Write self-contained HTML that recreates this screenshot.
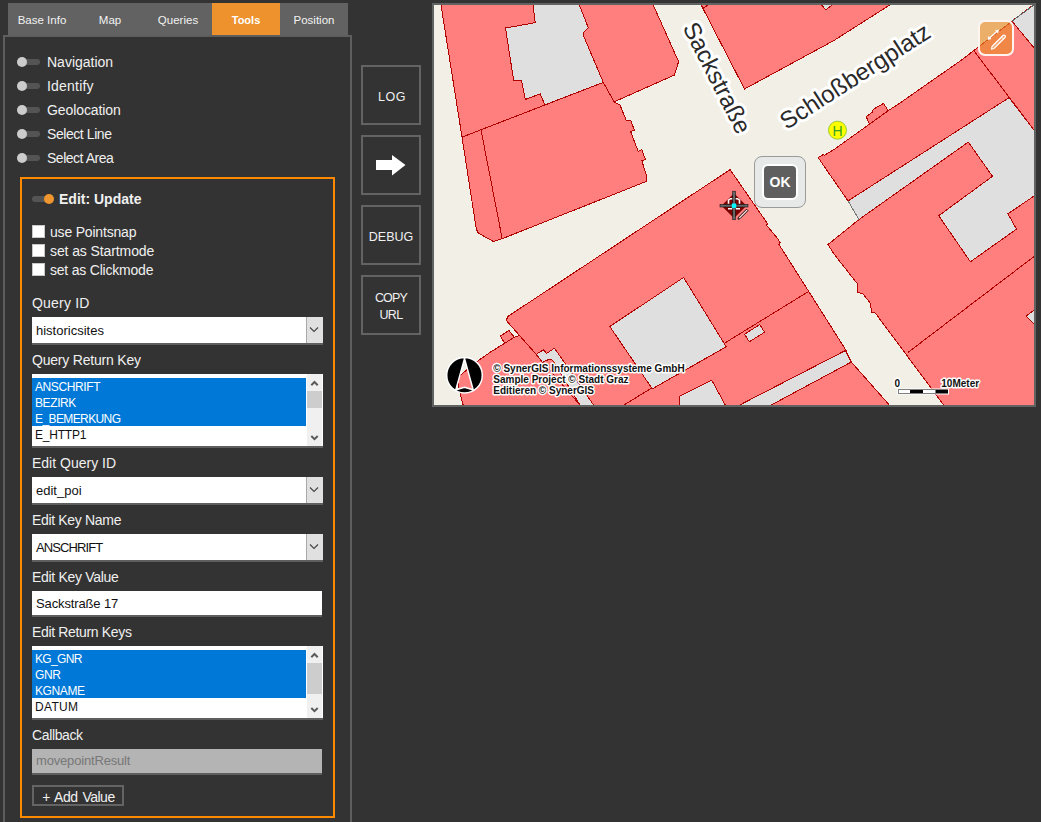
<!DOCTYPE html>
<html><head><meta charset="utf-8">
<style>
html,body{margin:0;padding:0;}
body{width:1041px;height:822px;overflow:hidden;background:#333333;position:relative;font-family:"Liberation Sans",sans-serif;color:#f0f0f0;}
.a{position:absolute;}
.tab{position:absolute;top:3px;height:32px;width:68px;background:#626262;color:#f2f2f2;font-size:11.5px;line-height:34px;text-align:center;}
.tab.on{background:#ee922e;font-weight:bold;color:#fff;font-size:11px;}
.panel{position:absolute;left:3px;top:35px;width:345px;height:800px;border:2px solid #5e5e5e;border-bottom:none;}
.tg{position:absolute;left:17px;width:23px;height:6px;border-radius:3px;background:#545454;}
.tg i{position:absolute;left:0px;top:-2px;width:10px;height:10px;border-radius:50%;background:#cccccc;}
.lbl{position:absolute;font-size:14px;line-height:16px;white-space:nowrap;color:#f0f0f0;}
.obox{position:absolute;left:20px;top:177px;width:311px;height:637px;border:2px solid #ff8a00;}
.cb{position:absolute;left:32px;width:11px;height:11px;background:#fff;border:1px solid #c8c8c8;}
.sel{position:absolute;left:32px;width:291px;height:26px;background:#fff;border-bottom:2px solid #5e5e5e;color:#111;font-size:13px;}
.sel span{position:absolute;left:4px;top:6px;line-height:16px;}
.sel .dd{position:absolute;right:0;top:0;width:16px;height:26px;background:#e0e0e0;border-left:1px solid #a8a8a8;}
.inp{position:absolute;left:32px;width:290px;height:24px;background:#fff;border-bottom:2px solid #5e5e5e;color:#111;font-size:13px;}
.inp span{position:absolute;left:4px;top:4px;line-height:16px;}
.lb{position:absolute;left:32px;width:291px;height:72px;background:#fff;border-bottom:2px solid #5e5e5e;color:#111;font-size:12px;}
.lb .row{position:absolute;left:0;width:274px;height:16px;line-height:16px;}
.lb .row span{position:absolute;left:3px;top:1px;letter-spacing:-0.4px;}
.lb .row.s{background:#0078d7;color:#fff;}
.lb .sb{position:absolute;left:275px;top:0;width:15px;height:72px;background:#f0f0f0;}
.lb .th{position:absolute;left:0;top:17px;width:15px;height:17px;background:#cdcdcd;}
.mbtn{position:absolute;left:361px;width:56px;height:56px;border:2px solid #636363;color:#f0f0f0;font-size:12.5px;text-align:center;}
</style></head><body>
<div class="tab" style="left:8px">Base Info</div>
<div class="tab" style="left:76px">Map</div>
<div class="tab" style="left:144px">Queries</div>
<div class="tab on" style="left:212px">Tools</div>
<div class="tab" style="left:280px">Position</div>
<div class="panel"></div>

<div class="tg" style="top:59px"><i></i></div><div class="lbl" style="left:47px;top:54px">Navigation</div>
<div class="tg" style="top:83px"><i></i></div><div class="lbl" style="left:47px;top:78px;letter-spacing:0.2px">Identify</div>
<div class="tg" style="top:107px"><i></i></div><div class="lbl" style="left:47px;top:102px;letter-spacing:-0.09px">Geolocation</div>
<div class="tg" style="top:131px"><i></i></div><div class="lbl" style="left:47px;top:126px;letter-spacing:-0.43px">Select Line</div>
<div class="tg" style="top:155px"><i></i></div><div class="lbl" style="left:47px;top:150px;letter-spacing:-0.48px">Select Area</div>

<div class="obox"></div>
<div class="a" style="left:32px;top:196px;width:21px;height:6px;border-radius:3px;background:#545454"></div>
<div class="a" style="left:44px;top:194px;width:10px;height:10px;border-radius:50%;background:#f0962e"></div>
<div class="lbl" style="left:59px;top:191px;font-weight:bold">Edit: Update</div>

<div class="cb" style="top:225px"></div><div class="lbl" style="left:50px;top:224px;letter-spacing:-0.19px">use Pointsnap</div>
<div class="cb" style="top:244px"></div><div class="lbl" style="left:50px;top:243px;letter-spacing:-0.1px">set as Startmode</div>
<div class="cb" style="top:263px"></div><div class="lbl" style="left:50px;top:262px;letter-spacing:-0.21px">set as Clickmode</div>

<div class="lbl" style="left:32px;top:295px;letter-spacing:0.2px">Query ID</div>
<div class="sel" style="top:317px"><span>historicsites</span><div class="dd"><svg style="position:absolute;left:2px;top:9px" width="10" height="7" viewBox="0 0 10 7"><path d="M1,1.5 L5,5.5 L9,1.5" fill="none" stroke="#444" stroke-width="1.1"/></svg></div></div>

<div class="lbl" style="left:32px;top:352px;letter-spacing:-0.2px">Query Return Key</div>
<div class="lb" style="top:374px">
 <div class="row s" style="top:4px"><span>ANSCHRIFT</span></div>
 <div class="row s" style="top:20px"><span>BEZIRK</span></div>
 <div class="row s" style="top:36px"><span style="letter-spacing:-0.6px">E_BEMERKUNG</span></div>
 <div class="row" style="top:52px"><span style="letter-spacing:-0.2px">E_HTTP1</span></div>
 <div class="sb"><svg style="position:absolute;left:2px;top:5px" width="11" height="8" viewBox="0 0 11 8"><path d="M2.3,6.2 L5.5,3 L8.7,6.2" fill="none" stroke="#5a5a5a" stroke-width="2"/></svg><div class="th"></div><svg style="position:absolute;left:2px;top:60px" width="11" height="8" viewBox="0 0 11 8"><path d="M2.3,2 L5.5,5.2 L8.7,2" fill="none" stroke="#5a5a5a" stroke-width="2"/></svg></div>
</div>

<div class="lbl" style="left:32px;top:455px">Edit Query ID</div>
<div class="sel" style="top:477px"><span>edit_poi</span><div class="dd"><svg style="position:absolute;left:2px;top:9px" width="10" height="7" viewBox="0 0 10 7"><path d="M1,1.5 L5,5.5 L9,1.5" fill="none" stroke="#444" stroke-width="1.1"/></svg></div></div>

<div class="lbl" style="left:32px;top:512px;letter-spacing:-0.33px">Edit Key Name</div>
<div class="sel" style="top:534px"><span style="letter-spacing:-0.9px">ANSCHRIFT</span><div class="dd"><svg style="position:absolute;left:2px;top:9px" width="10" height="7" viewBox="0 0 10 7"><path d="M1,1.5 L5,5.5 L9,1.5" fill="none" stroke="#444" stroke-width="1.1"/></svg></div></div>

<div class="lbl" style="left:32px;top:569px;letter-spacing:-0.3px">Edit Key Value</div>
<div class="inp" style="top:591px"><span style="letter-spacing:-0.13px;top:5px">Sackstraße 17</span></div>

<div class="lbl" style="left:32px;top:624px;letter-spacing:-0.34px">Edit Return Keys</div>
<div class="lb" style="top:646px">
 <div class="row s" style="top:4px"><span style="letter-spacing:-0.66px">KG_GNR</span></div>
 <div class="row s" style="top:20px"><span>GNR</span></div>
 <div class="row s" style="top:36px"><span>KGNAME</span></div>
 <div class="row" style="top:52px"><span style="letter-spacing:0.3px">DATUM</span></div>
 <div class="sb"><svg style="position:absolute;left:2px;top:5px" width="11" height="8" viewBox="0 0 11 8"><path d="M2.3,6.2 L5.5,3 L8.7,6.2" fill="none" stroke="#5a5a5a" stroke-width="2"/></svg><div class="th" style="height:31px"></div><svg style="position:absolute;left:2px;top:60px" width="11" height="8" viewBox="0 0 11 8"><path d="M2.3,2 L5.5,5.2 L8.7,2" fill="none" stroke="#5a5a5a" stroke-width="2"/></svg></div>
</div>

<div class="lbl" style="left:32px;top:727px;letter-spacing:-0.37px">Callback</div>
<div class="inp" style="top:749px;background:#b4b4b4;color:#777"><span style="letter-spacing:-0.17px">movepointResult</span></div>

<div class="a" style="left:32px;top:785px;width:88px;height:17px;border:2px solid #646464;font-size:14px;line-height:21px;text-align:center;color:#f0f0f0;letter-spacing:-0.5px;word-spacing:1.5px;text-indent:1px">+ Add Value</div>

<div class="mbtn" style="top:65px;line-height:60px;letter-spacing:0.6px;text-indent:2px">LOG</div>
<div class="mbtn" style="top:135px"><svg style="position:absolute;left:11px;top:17px" width="34" height="24" viewBox="0 0 34 24"><path d="M2,6 H18 V1 L31.5,11 L18,21.5 V16 H2 Z" fill="#fff"/></svg></div>
<div class="mbtn" style="top:205px;line-height:60px">DEBUG</div>
<div class="mbtn" style="top:275px;line-height:17px"><div style="padding-top:13px"><span style="letter-spacing:-0.8px">COPY</span><br><span style="letter-spacing:-0.6px">URL</span></div></div>

<div class="a" style="left:432px;top:3px;width:600px;height:400px;border:2px solid #616262;background:#f2efe6"></div>
<svg class="a" style="left:434px;top:5px" width="600" height="400" viewBox="434 5 600 400" shape-rendering="crispEdges">
<rect x="434" y="5" width="600" height="400" fill="#f2efe6"/>
<g fill="#ff7f7f" stroke="#b00000" stroke-width="1" stroke-linejoin="miter">
<polygon points="440.2,0 462,137 476.3,229.1 478.2,233 493.6,241.6 502.2,238.7 646.2,181.5 646.9,177.1 641.8,160.6 645.5,159.6 641.8,149.8 638.2,151.5 630.6,131.4 634.5,130.4 630.9,120.9 626.5,120.9 619.9,104.8 614.1,101.9 674.3,75.1 678.6,61.7 651,0"/>
<polygon points="698.6,0 744.5,89 834,40.5 897.5,0"/>
<polygon points="818.2,157.7 823.1,154.7 824.3,155.3 833.3,150 869.6,124.1 866.2,116.8 872.7,112 873.1,109.4 883.5,103.4 888.2,110.7 900,103 961.6,60 1039.5,0 1040,0 1040,410 947.4,410 875.3,313 871.5,312 870.5,303.4 862.8,293.8 857,291.9 857,283.3 842.6,265 834,254 828,244.5 834,239.7 859,219.5 848,200.9"/>
<polygon points="730.1,169.6 764.6,219.5 767.5,223.4 766.6,225.3 777.1,237.8 780,242.6 779,244.5 845.5,349.5 851.3,362 893.7,410 464.5,410 460.1,393.8 457,378 477.1,361.4 490,352.4 504.6,343.3 500.3,336 508.9,330.5 514.3,337.2 519.4,335.4 506.4,320.6 507.6,316.6"/>
</g>
<g fill="none" stroke="#b00000" stroke-width="1">
<polyline points="577.4,0 588.3,27.7 583.9,31.9 583.5,35.7 603.3,82.4 614.1,101.9"/>
<polyline points="462.3,137 603.3,82.4"/>
<polyline points="481,130 502.2,238.7"/>
<polyline points="702.3,8.4 710,4"/>
<polyline points="974.2,51.2 1034,130"/>
<polyline points="908,352.4 1040,252"/>
<polyline points="624,405 807.9,291.9"/>
<polyline points="519.4,335.4 536.2,354.3 580,405"/>
<polyline points="869.6,124.1 888.2,110.7"/>
<polyline points="514.3,337.2 504.6,343.3"/>
</g>
<g fill="#dfdfdf" stroke="#b00000" stroke-width="1">
<polygon points="532.4,0 535.2,22.7 505.5,28 513.7,80.9 521.4,80.3 525.3,99.5 540.2,93.8 544.9,104.9 603.3,82.4 583.5,35.7 583.9,31.9 588.3,27.7 577.4,0"/>
<polygon points="817,0 826,9.9 838,0"/>
<polygon points="1011.9,21.1 1034,47.8 1040,47.8 1040,0 1040,0"/>
<polygon points="848,200.9 1009,97.7 1034,130 1040,130 1040,192 1007.9,213.8 1016.5,229.1 970.4,261.8 938.7,215.7 992.5,176.3 968.3,142.1 859,219.5"/>
<polygon points="1026,316 1040,306 1040,330"/>
<polygon points="609.8,326.5 683.6,277.5 726.2,346.7 652.3,388.9"/>
<polygon points="744.5,334.2 759.8,324.6 764.6,332.2 749.3,341.8"/>
<polygon points="730,410 845.5,350.5 851.3,362 762,410"/>
<polygon points="679.1,396.6 711.8,380.3 728,410 680,410"/>
<polygon points="536.2,354.3 543.5,349.8 546.6,353.4 554.5,348.2 597,410 583,410 552.7,360.4 549.6,359.1 542.3,362.2"/>
</g>
<polyline points="1011.9,21.1 1034,5" stroke="#666" stroke-width="1" fill="none"/>
<polyline points="848,200.9 859,219.5" stroke="#777" stroke-width="1" fill="none"/>
</svg>

<svg class="a" style="left:434px;top:5px" width="600" height="400" viewBox="434 5 600 400">
<g font-family="Liberation Sans" font-size="24" fill="#fff" stroke="#fff" stroke-width="6" stroke-linejoin="round">
<text text-anchor="middle" transform="translate(709.8,81.5) rotate(63)">Sackstraße</text>
<text transform="translate(786.6,130.2) rotate(-32.8)">Schloßbergplatz</text>
</g>
<g font-family="Liberation Sans" font-size="24" fill="#2a2a2a">
<text text-anchor="middle" transform="translate(709.8,81.5) rotate(63)">Sackstraße</text>
<text transform="translate(786.6,130.2) rotate(-32.8)">Schloßbergplatz</text>
</g>
<circle cx="837.5" cy="130.2" r="9" fill="#ffff00" stroke="#99cc33" stroke-width="1"/>
<text x="837.5" y="135.5" text-anchor="middle" font-family="Liberation Sans" font-size="14" fill="#33a02c">H</text>
<g font-family="Liberation Sans" font-weight="bold" font-size="10" fill="#111" stroke="#fff" stroke-width="2.8" stroke-linejoin="round" paint-order="stroke">
<text x="493.3" y="371.8">© SynerGIS Informationssysteme GmbH</text>
<text x="493.3" y="383">Sample Project © Stadt Graz</text>
<text x="493.3" y="393.7">Editieren © SynerGIS</text>
<text x="894.5" y="387">0</text>
<text x="941.3" y="387">10Meter</text>
</g>
<rect x="897.5" y="389" width="51" height="5" fill="#000" stroke="#fff" stroke-width="1"/>
<rect x="898.5" y="390" width="11.5" height="3" fill="#fff"/>
<rect x="923" y="390" width="12.5" height="3" fill="#fff"/>
<path fill-rule="evenodd" fill="#000" stroke="#fff" stroke-width="1.5" d="M446.7,375.2 a17.8,17.8 0 1,0 35.6,0 a17.8,17.8 0 1,0 -35.6,0 Z M464.5,358.6 L455.8,389.8 L464.5,387.3 L473.2,389.8 Z"/>
<g transform="translate(734,205.7)">
<polygon points="0,-12.5 12.5,0 0,12.5 -12.5,0" fill="#7a0000"/>
<path d="M-5.5,-2 v-3.5 l2,-1.5 h7 l2,1.5 v3.5 M-6,3 h12" fill="none" stroke="#fff" stroke-width="1.6"/>
<rect x="-14" y="-1.3" width="28" height="2.6" fill="#666" stroke="#111" stroke-width="0.6"/>
<rect x="-1.3" y="-14.5" width="2.6" height="28.5" fill="#666" stroke="#111" stroke-width="0.6"/>
<rect x="-2.2" y="-2.2" width="4.4" height="4.4" fill="#00ffff"/>
<path d="M4.5,11.5 L12.5,3.5 L14,5 L6,13 L4,13.5 Z" fill="#ffd0d0" stroke="#111" stroke-width="1"/>
</g>
</svg>
<div class="a" style="left:754px;top:156px;width:50px;height:50px;border:1px solid #9a9a9a;border-radius:8px;background:#e6e9e8"></div>
<div class="a" style="left:762px;top:164px;width:32px;height:32px;border:2px solid #fff;border-radius:6px;background:#5f5f5f;color:#fff;font-weight:bold;font-size:14px;line-height:32px;text-align:center">OK</div>
<div class="a" style="left:978px;top:20px;width:32px;height:32px;border:2px solid rgba(255,250,248,0.95);border-radius:7px;background:rgba(232,140,40,0.65)"></div>
<svg class="a" style="left:979px;top:21px" width="34" height="35" viewBox="0 0 34 35">
<path d="M9.5,18 L19,9.5" stroke="#fff" stroke-width="1.3"/>
<path d="M8.5,19 l1,-4 l3,3 z M20,8.5 l-4,1 l3,3 z" fill="#fff"/>
<path d="M13,25.5 L24,14.5 a1.3,1.3 0 0 1 2,2 L15,27.5 L12.5,28 z" fill="rgba(255,220,200,0.35)" stroke="#fff" stroke-width="1.1"/><path d="M22.5,16 l2,2" stroke="#fff" stroke-width="0.8"/>
</svg>
</body></html>
